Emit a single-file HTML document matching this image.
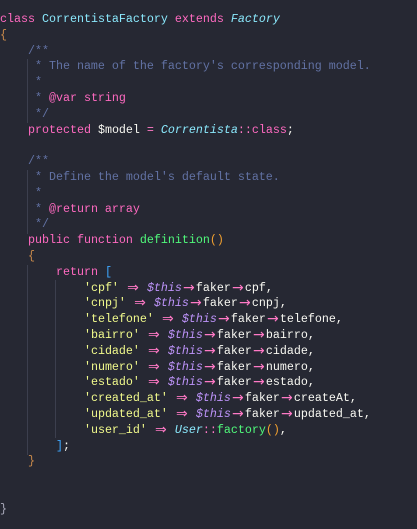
<!DOCTYPE html>
<html><head><meta charset="utf-8"><style>
html,body{margin:0;padding:0;background:#262833;width:417px;height:529px;overflow:hidden}
pre{margin:0;position:absolute;left:0;top:12px;font-family:"Liberation Mono","DejaVu Sans Mono",monospace;font-size:11.67px;line-height:15.8px;color:#f8f8f2;white-space:pre}
.k{color:#ff6ac1}.c{color:#8be9fd}.i{font-style:italic}.cm{color:#6272a4}.s{color:#f1fa8c}.v{color:#bd93f9;font-style:italic}
.g{color:#50fa7b}.b{color:#c98a4b}.p{color:#f0a030}.q{color:#3fa8ff}.op{color:#ff79c6}
.a,.r{display:inline-block;width:14px;height:15.8px;line-height:15.8px;vertical-align:top;text-align:center;color:#ff79c6;font-family:"DejaVu Sans",sans-serif;font-size:14px;overflow:hidden}
.guide{position:absolute;width:1px;background:#3c3f4e}
</style></head><body>
<div class="guide" style="left:27px;top:59px;height:64px"></div>
<div class="guide" style="left:27px;top:170px;height:64px"></div>
<div class="guide" style="left:27px;top:265px;height:190px"></div>
<div class="guide" style="left:55px;top:280px;height:158px"></div>
<pre><span class="k">class</span> <span class="c">CorrentistaFactory</span> <span class="k">extends</span> <span class="c i">Factory</span>
<span class="b">{</span>
    <span class="cm">/**</span>
<span class="cm">     * The name of the factory's corresponding model.</span>
<span class="cm">     *</span>
<span class="cm">     * </span><span class="k">@var string</span>
<span class="cm">     */</span>
    <span class="k">protected</span> $model <span class="op">=</span> <span class="c i">Correntista</span><span class="op">::</span><span class="k">class</span>;

    <span class="cm">/**</span>
<span class="cm">     * Define the model's default state.</span>
<span class="cm">     *</span>
<span class="cm">     * </span><span class="k">@return array</span>
<span class="cm">     */</span>
    <span class="k">public function</span> <span class="g">definition</span><span class="p">()</span>
    <span class="b">{</span>
        <span class="k">return</span> <span class="q">[</span>
            <span class="s">'cpf'</span> <span class="a">⇒</span> <span class="v">$this</span><span class="r">→</span>faker<span class="r">→</span>cpf,
            <span class="s">'cnpj'</span> <span class="a">⇒</span> <span class="v">$this</span><span class="r">→</span>faker<span class="r">→</span>cnpj,
            <span class="s">'telefone'</span> <span class="a">⇒</span> <span class="v">$this</span><span class="r">→</span>faker<span class="r">→</span>telefone,
            <span class="s">'bairro'</span> <span class="a">⇒</span> <span class="v">$this</span><span class="r">→</span>faker<span class="r">→</span>bairro,
            <span class="s">'cidade'</span> <span class="a">⇒</span> <span class="v">$this</span><span class="r">→</span>faker<span class="r">→</span>cidade,
            <span class="s">'numero'</span> <span class="a">⇒</span> <span class="v">$this</span><span class="r">→</span>faker<span class="r">→</span>numero,
            <span class="s">'estado'</span> <span class="a">⇒</span> <span class="v">$this</span><span class="r">→</span>faker<span class="r">→</span>estado,
            <span class="s">'created_at'</span> <span class="a">⇒</span> <span class="v">$this</span><span class="r">→</span>faker<span class="r">→</span>createAt,
            <span class="s">'updated_at'</span> <span class="a">⇒</span> <span class="v">$this</span><span class="r">→</span>faker<span class="r">→</span>updated_at,
            <span class="s">'user_id'</span> <span class="a">⇒</span> <span class="c i">User</span><span class="op">::</span><span class="g">factory</span><span class="p">()</span>,
        <span class="q">]</span>;
    <span class="b">}</span>


<span style="color:#aab">}</span></pre>
</body></html>
